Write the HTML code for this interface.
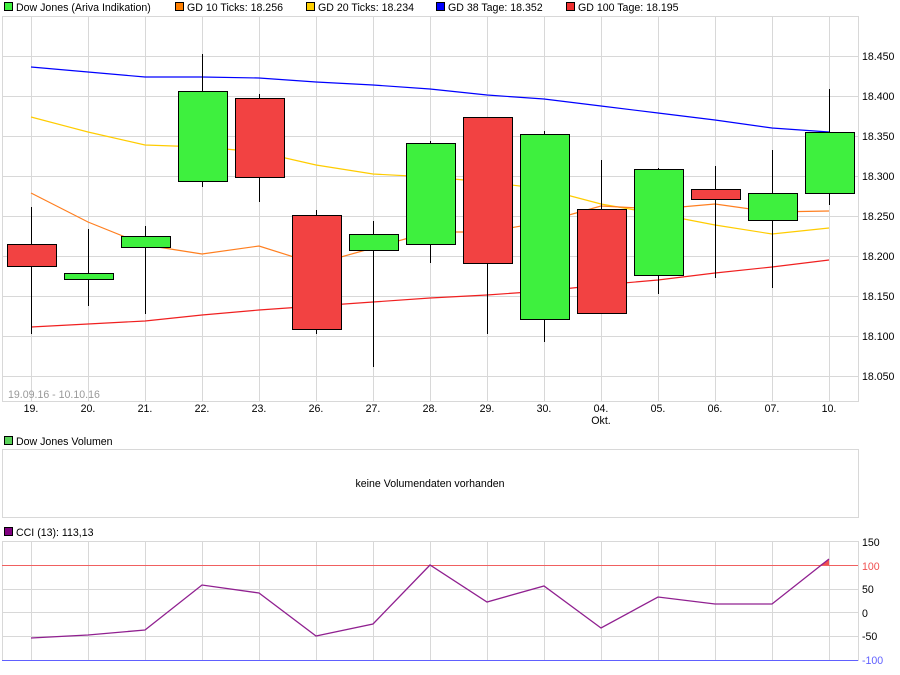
<!DOCTYPE html><html><head><style>body{margin:0;background:#fff;width:900px;height:670px;overflow:hidden}svg text{font-family:"Liberation Sans",sans-serif;font-size:10.6px}</style></head><body>
<svg width="900" height="670" xmlns="http://www.w3.org/2000/svg">
<g stroke="#000" stroke-width="1">
<rect x="4.5" y="2.5" width="8" height="8" fill="#3ef03e"/>
<rect x="175.5" y="2.5" width="8" height="8" fill="#ff7f00"/>
<rect x="306.5" y="2.5" width="8" height="8" fill="#ffd000"/>
<rect x="436.5" y="2.5" width="8" height="8" fill="#0000ff"/>
<rect x="566.5" y="2.5" width="8" height="8" fill="#f03030"/>
<rect x="4.5" y="436.5" width="8" height="8" fill="#5ad25a"/>
<rect x="4.5" y="527.5" width="8" height="8" fill="#800080"/>
</g>
<g fill="#000">
<text x="16" y="11">Dow Jones (Ariva Indikation)</text>
<text x="187" y="11">GD 10 Ticks: 18.256</text>
<text x="318" y="11">GD 20 Ticks: 18.234</text>
<text x="448" y="11">GD 38 Tage: 18.352</text>
<text x="578" y="11">GD 100 Tage: 18.195</text>
<text x="16" y="445">Dow Jones Volumen</text>
<text x="16" y="536">CCI (13): 113,13</text>
<text x="430" y="487" text-anchor="middle">keine Volumendaten vorhanden</text>
</g>
<g stroke="#d8d8d8" stroke-width="1">
<rect x="2.5" y="16.5" width="856" height="385" fill="none"/>
<path d="M31.5 17V401M88.5 17V401M145.5 17V401M202.5 17V401M259.5 17V401M316.5 17V401M373.5 17V401M430.5 17V401M487.5 17V401M544.5 17V401M601.5 17V401M658.5 17V401M715.5 17V401M772.5 17V401M829.5 17V401"/>
<path d="M2 56.5H858M2 96.5H858M2 136.5H858M2 176.5H858M2 216.5H858M2 256.5H858M2 296.5H858M2 336.5H858M2 376.5H858"/>
<rect x="2.5" y="449.5" width="856" height="68" fill="none"/>
<rect x="2.5" y="541.5" width="856" height="119" fill="none"/>
<path d="M31.5 542V660M88.5 542V660M145.5 542V660M202.5 542V660M259.5 542V660M316.5 542V660M373.5 542V660M430.5 542V660M487.5 542V660M544.5 542V660M601.5 542V660M658.5 542V660M715.5 542V660M772.5 542V660M829.5 542V660"/>
<path d="M2 589.5H858M2 612.5H858M2 636.5H858"/>
</g>
<g fill="#000">
<text x="862" y="60">18.450</text><text x="862" y="100">18.400</text><text x="862" y="140">18.350</text><text x="862" y="180">18.300</text><text x="862" y="220">18.250</text><text x="862" y="260">18.200</text><text x="862" y="300">18.150</text><text x="862" y="340">18.100</text><text x="862" y="380">18.050</text>
</g>
<text x="8" y="398" fill="#999">19.09.16 - 10.10.16</text>
<g fill="#000" text-anchor="middle">
<text x="31" y="412">19.</text><text x="88" y="412">20.</text><text x="145" y="412">21.</text><text x="202" y="412">22.</text><text x="259" y="412">23.</text><text x="316" y="412">26.</text><text x="373" y="412">27.</text><text x="430" y="412">28.</text><text x="487" y="412">29.</text><text x="544" y="412">30.</text><text x="601" y="412">04.</text><text x="601" y="424">Okt.</text><text x="658" y="412">05.</text><text x="715" y="412">06.</text><text x="772" y="412">07.</text><text x="829" y="412">10.</text>
</g>
<g fill="none" stroke-width="1.2">
<polyline stroke="#0000ff" points="31,67 88,72 145,77 202,77 259,78 316,82 373,85 430,89 487,95 544,99 601,106 658,113 715,120 772,128 829,132"/>
<polyline stroke="#ffcc00" points="31,117 88,132 145,145 202,147 259,152 316,165 373,174 430,177 487,182 544,189 601,204 658,214 715,225 772,234 829,228"/>
<polyline stroke="#ff7f20" points="31,193 88,222 145,245 202,254 259,246 316,264 373,248 430,232 487,232 544,222 601,206 658,209 715,204 772,212 829,211"/>
<polyline stroke="#f02020" points="31,327 88,324 145,321 202,315 259,310 316,306 373,302 430,298 487,295 544,291 601,285 658,280 715,273 772,267 829,260"/>
</g>
<g stroke="#000" stroke-width="1">
<path d="M31.5 207V334M88.5 229V306M145.5 226V314M202.5 54V187M259.5 94V202M316.5 210V334M373.5 221V367M430.5 141V263M487.5 117V334M544.5 131V342M601.5 160V313M658.5 168V294M715.5 166V278M772.5 150V288M829.5 89V205"/>
<rect x="7.5" y="244.5" width="49" height="22" fill="#f24242"/>
<rect x="64.5" y="273.5" width="49" height="6" fill="#3ef03e"/>
<rect x="121.5" y="236.5" width="49" height="11" fill="#3ef03e"/>
<rect x="178.5" y="91.5" width="49" height="90" fill="#3ef03e"/>
<rect x="235.5" y="98.5" width="49" height="79" fill="#f24242"/>
<rect x="292.5" y="215.5" width="49" height="114" fill="#f24242"/>
<rect x="349.5" y="234.5" width="49" height="16" fill="#3ef03e"/>
<rect x="406.5" y="143.5" width="49" height="101" fill="#3ef03e"/>
<rect x="463.5" y="117.5" width="49" height="146" fill="#f24242"/>
<rect x="520.5" y="134.5" width="49" height="185" fill="#3ef03e"/>
<rect x="577.5" y="209.5" width="49" height="104" fill="#f24242"/>
<rect x="634.5" y="169.5" width="49" height="106" fill="#3ef03e"/>
<rect x="691.5" y="189.5" width="49" height="10" fill="#f24242"/>
<rect x="748.5" y="193.5" width="49" height="27" fill="#3ef03e"/>
<rect x="805.5" y="132.5" width="49" height="61" fill="#3ef03e"/>
</g>
<path d="M2 565.5H858" stroke="#f06060"/>
<path d="M2 660.5H858" stroke="#6060ff"/>
<polygon points="820,565 829,559 829,565" fill="#f05050"/>
<polyline fill="none" stroke="#902090" stroke-width="1.3" points="31,638 88,635 145,630 202,585 259,593 316,636 373,624 430,565 487,602 544,586 601,628 658,597 715,604 772,604 829,559"/>
<g fill="#000"><text x="862" y="546">150</text><text x="862" y="570" fill="#f05050">100</text><text x="862" y="593">50</text><text x="862" y="617">0</text><text x="862" y="640">-50</text><text x="862" y="664" fill="#6060ff">-100</text></g>
</svg>
</body></html>
